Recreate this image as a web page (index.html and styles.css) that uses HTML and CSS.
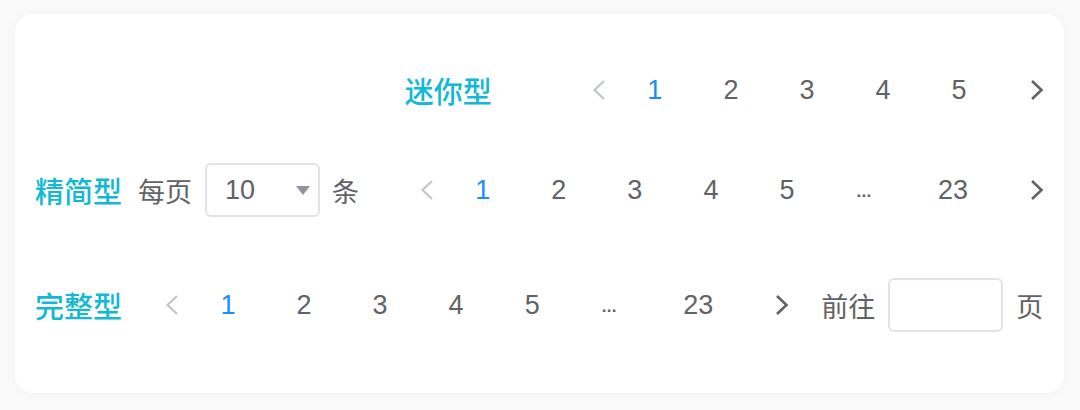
FILE: index.html
```html
<!DOCTYPE html>
<html lang="zh-CN">
<head>
  <meta charset="UTF-8">
  <title>分页</title>
  <meta name="viewport" content="width=device-width, initial-scale=1.0">
  <link rel="stylesheet" href="styles.css">
</head>
<body>

<div class="card">

  <!-- 迷你型 -->
  <div class="row row-mini">
    <span class="label">迷你型</span>
    <div class="pager mini-pager">
      <span class="pg-btn prev disabled">
        <svg width="14" height="20" viewBox="0 0 14 20"><polyline points="12,1 2.5,10 12,19"/></svg>
      </span>
      <span class="pg-num active">1</span>
      <span class="pg-num">2</span>
      <span class="pg-num">3</span>
      <span class="pg-num">4</span>
      <span class="pg-num">5</span>
      <span class="pg-btn next">
        <svg width="14" height="20" viewBox="0 0 14 20"><polyline points="2,1 11.5,10 2,19"/></svg>
      </span>
    </div>
  </div>

  <!-- 精简型 -->
  <div class="row row-simple">
    <span class="label">精简型</span>
    <span class="text size-text">每页</span>
    <div class="select">
      <span class="select-value">10</span>
      <span class="caret"></span>
    </div>
    <span class="text unit-text">条</span>
    <div class="pager simple-pager">
      <span class="pg-btn prev disabled">
        <svg width="14" height="20" viewBox="0 0 14 20"><polyline points="12,1 2.5,10 12,19"/></svg>
      </span>
      <span class="pg-num active">1</span>
      <span class="pg-num">2</span>
      <span class="pg-num">3</span>
      <span class="pg-num">4</span>
      <span class="pg-num">5</span>
      <span class="pg-num pg-more"><span class="dots">...</span></span>
      <span class="pg-num pg-last">23</span>
      <span class="pg-btn next">
        <svg width="14" height="20" viewBox="0 0 14 20"><polyline points="2,1 11.5,10 2,19"/></svg>
      </span>
    </div>
  </div>

  <!-- 完整型 -->
  <div class="row row-full">
    <span class="label">完整型</span>
    <div class="pager full-pager">
      <span class="pg-btn prev disabled">
        <svg width="14" height="20" viewBox="0 0 14 20"><polyline points="12,1 2.5,10 12,19"/></svg>
      </span>
      <span class="pg-num active">1</span>
      <span class="pg-num">2</span>
      <span class="pg-num">3</span>
      <span class="pg-num">4</span>
      <span class="pg-num">5</span>
      <span class="pg-num pg-more"><span class="dots">...</span></span>
      <span class="pg-num pg-last">23</span>
      <span class="pg-btn next">
        <svg width="14" height="20" viewBox="0 0 14 20"><polyline points="2,1 11.5,10 2,19"/></svg>
      </span>
    </div>
    <span class="text jump-text">前往</span>
    <input class="jump-input" type="text">
    <span class="text page-text">页</span>
  </div>

</div>

</body>
</html>
```

FILE: styles.css
```css
* { box-sizing: border-box; margin: 0; padding: 0; }
body {
  font-family: "Liberation Sans", "Noto Sans CJK SC", sans-serif;
  background: #fafafa;
  padding: 14px 16px 17px 15px;
  color: #606266;
}
.card {
  background: #fff;
  border-radius: 18px;
  box-shadow: 0 0 14px rgba(0, 0, 0, 0.035);
  padding: 49px 20px 61px 20px;
  height: 379px;
}
.row {
  display: flex;
  align-items: center;
  height: 54px;
  white-space: nowrap;
}
.row > *, .pager > * { flex-shrink: 0; }
.row-mini {
  justify-content: flex-end;
  margin-bottom: 46px;
}
.row-simple {
  margin-bottom: 61px;
}
.label {
  font-family: "Noto Sans CJK SC", sans-serif;
  font-size: 29px;
  font-weight: 500;
  color: #12b9d5;
  line-height: 1;
}
.text {
  font-family: "Noto Sans CJK SC", sans-serif;
  font-size: 27px;
  color: #606266;
  line-height: 1;
}

/* pager */
.pager {
  display: flex;
  align-items: center;
  height: 54px;
}
.mini-pager { margin-left: 100px; }
.simple-pager { margin-left: auto; }
.full-pager { margin-left: 43px; }
.pg-btn {
  display: flex;
  align-items: center;
  height: 54px;
}
.pg-btn svg {
  fill: none;
  stroke: #606266;
  stroke-width: 2.6;
}
.pg-btn.prev { margin-right: 11px; }
.pg-btn.next { margin-left: 33px; }
.pg-btn.disabled svg { stroke: #c0c4cc; stroke-width: 2.2; }
.pg-num {
  font-size: 27px;
  line-height: 54px;
  padding: 0 30.5px;
  color: #606266;
  text-align: center;
}
.pg-num.active { color: #1a8cff; }
.pg-more {
  width: 78px;
  padding: 0;
}
.pg-more .dots {
  font-size: 17px;
  font-weight: bold;
  letter-spacing: 0.2px;
}
.pg-last { padding: 0 29px 0 35px; }

/* page size select */
.size-text { margin-left: 16px; }
.select {
  display: flex;
  align-items: center;
  justify-content: space-between;
  width: 115px;
  height: 54px;
  margin-left: 13px;
  border: 2px solid #e0e3e9;
  border-radius: 6px;
  padding: 0 8px 0 18px;
}
.select-value {
  font-size: 27px;
  color: #606266;
}
.caret {
  width: 0;
  height: 0;
  border-left: 7px solid transparent;
  border-right: 7px solid transparent;
  border-top: 9px solid #909399;
}
.unit-text { margin-left: 12px; }

/* jumper */
.jump-text { margin-left: 32px; }
.jump-input {
  width: 115px;
  height: 54px;
  margin-left: 13px;
  border: 2px solid #e0e3e9;
  border-radius: 6px;
  background: #fff;
  outline: none;
}
.page-text { margin-left: 13px; }
```
